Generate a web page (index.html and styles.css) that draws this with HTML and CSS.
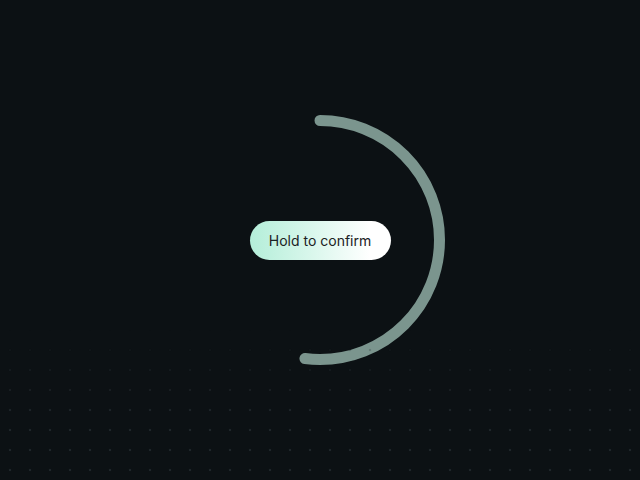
FILE: index.html
```html
<!DOCTYPE html>
<html lang="en">
<head>
<meta charset="utf-8">
<title>Hold to confirm</title>
<link rel="stylesheet" href="styles.css">
</head>
<body>
<main class="stage">
  <div class="dots"></div>
  <svg class="ring" width="640" height="480" viewBox="0 0 640 480" aria-hidden="true">
    <circle cx="320" cy="240" r="119.5" fill="none" stroke="#7b958e" stroke-width="11" stroke-linecap="round" stroke-dasharray="390.4 1000" transform="rotate(-90 320 240)"/>
  </svg>
  <button class="hold">Hold to confirm</button>
</main>
</body>
</html>
```
FILE: styles.css
```css
html, body {
  margin: 0;
  padding: 0;
  background: #0c1114;
}
.stage {
  width: 640px;
  height: 480px;
  display: grid;
  place-items: center;
  overflow: hidden;
}
.stage > * {
  grid-area: 1 / 1;
}
.dots {
  width: 640px;
  height: 480px;
  background-image: radial-gradient(circle at 10px 10px, #1f262a 1.2px, transparent 1.6px);
  background-size: 20px 20px;
  -webkit-mask-image: linear-gradient(to bottom, transparent 0, transparent 330px, #000 420px);
  mask-image: linear-gradient(to bottom, transparent 0, transparent 330px, #000 420px);
}
.ring {
  display: block;
}
.hold {
  width: 141px;
  height: 39px;
  border: none;
  border-radius: 20px;
  background: linear-gradient(90deg, #b4eed9 0%, #d6f6ea 40%, #ffffff 85%);
  color: #1b2124;
  font-family: Inter, "Noto Sans", sans-serif;
  font-size: 14px;
  font-weight: 400;
  padding: 0;
  cursor: pointer;
}
```
